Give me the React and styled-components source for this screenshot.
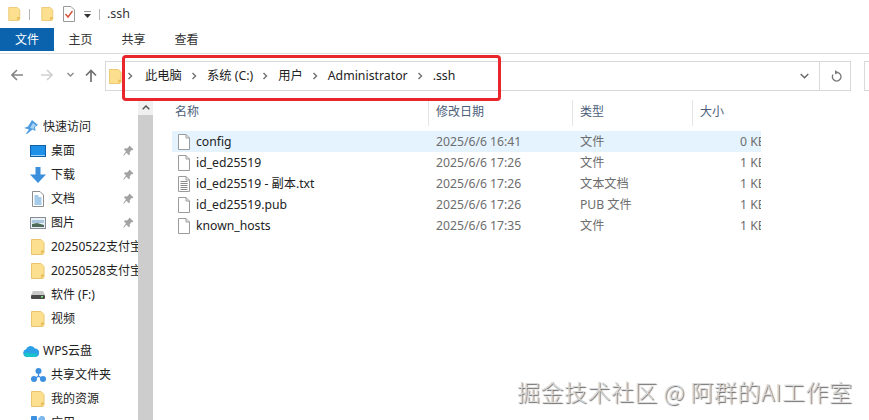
import React from "react";
import styled, { createGlobalStyle } from "styled-components";

const Global = createGlobalStyle`
  html, body { margin: 0; padding: 0; background: #fff; }
  * { box-sizing: border-box; }
`;
const Window = styled.div`
  position: relative; width: 869px; height: 420px; overflow: hidden; background: #fff;
  font: 12px/16px "Noto Sans", "Noto Sans CJK SC", sans-serif; color: #222;
  display: flex; flex-direction: column;
`;
const TitleBar = styled.div`
  height: 28px; flex: none; display: flex; align-items: center; padding: 0 0 0 8px;
  font-size: 12.5px; color: #333;
`;
const VLine = styled.span`
  width: 1px; height: 11px; background: #b5b5b5; flex: none; margin: ${p => p.$m};
`;
const Tabs = styled.div`
  height: 26px; flex: none; display: flex; align-items: flex-start; border-bottom: 1px solid #dcdcdc;
`;
const FileTab = styled.div`
  width: 54px; height: 23px; background: #0b63ae; color: #fff; display: flex; align-items: center; justify-content: center;
`;
const Tab = styled.div`
  width: 53px; height: 23px; display: flex; align-items: center; justify-content: center; color: #333;
`;
const NavRow = styled.div`
  height: 46px; flex: none; display: flex; align-items: flex-start; padding: 7px 0 0 11px;
`;
const NavIcon = styled.svg`
  flex: none; margin: ${p => p.$m}; display: block;
`;
const AddressBox = styled.div`
  width: 746px; height: 30px; flex: none; border: 1px solid #d9d9d9; display: flex; align-items: center; padding-left: 3px; margin-left: 8px;
`;
const Crumbs = styled.div`
  display: flex; align-items: center; margin-left: 5px; flex: 1; font-size: 12.3px; color: #222;
`;
const Crumb = styled.span`
  margin: 0 9px 0 ${p => p.$first ? 12 : 10}px; white-space: nowrap;
`;
const AddressEnd = styled.div`
  width: 31px; height: 28px; border-left: 1px solid #d9d9d9; display: flex; align-items: center; justify-content: center; flex: none; padding-left: 2px;
`;
const SearchBox = styled.div`
  width: 20px; height: 30px; margin-left: 13px; flex: none; border: 1px solid #d9d9d9; border-right: 0;
`;
const Main = styled.div`
  flex: 1; min-height: 0; display: flex;
`;
const Sidebar = styled.div`
  width: 138px; flex: none; overflow: hidden; padding-top: 15px;
`;
const NavItem = styled.div`
  height: 24px; display: flex; align-items: center; white-space: nowrap; position: relative;
  padding-left: ${p => p.$head ? "23px" : "30px"}; margin-top: ${p => p.$gap ? "8px" : "0"};
  font-size: 12px; color: #222;
`;
const NavLabel = styled.span`
  margin-left: ${p => p.$head ? "4px" : "5px"};
`;
const PinSlot = styled.span`
  position: absolute; left: 123px; top: 6px; display: block;
`;
const Scrollbar = styled.div`
  width: 15px; flex: none; background: #f0f0f0; display: flex; flex-direction: column;
`;
const ScrollUp = styled.div`
  height: 15px; flex: none; display: flex; align-items: center; justify-content: center;
`;
const ScrollThumb = styled.div`
  flex: 1; background: #cdcdcd;
`;
const Content = styled.div`
  flex: 1; padding-left: 19px; min-width: 0;
`;
const grid = `display: grid; grid-template-columns: 257px 144px 120px 68px; width: 589px;`;
const Header = styled.div`
  ${grid} height: 31px; color: #4c607a;
`;
const HeadCell = styled.div`
  height: 26px; padding: 0 0 2px ${p => p.$pad || 7}px; border-left: ${p => p.$first ? "0" : "1px solid #e5e5e5"};
  display: flex; align-items: center; margin-left: ${p => p.$first ? "0" : "-1px"};
`;
const Row = styled.div`
  ${grid} height: 21px; align-items: center; background: ${p => p.$sel ? "#e5f3ff" : "transparent"}; color: #6d6d6d;
`;
const NameCell = styled.div`
  display: flex; align-items: center; gap: 6px; padding-left: 6px; color: #222; font-size: 12.2px; white-space: nowrap;
`;
const Cell = styled.div`
  padding-left: ${p => p.$pad || 7}px; white-space: nowrap; overflow: hidden; font-size: 12.2px;
`;
const Highlight = styled.div`
  position: absolute; left: 122px; top: 55px; width: 379px; height: 46px;
  border: 3px solid #e8262b; border-radius: 4px;
`;
const Watermark = styled.div`
  position: absolute; left: 517px; top: 375px; font-size: 23px; line-height: 32px; white-space: nowrap; font-weight: 300;
  font-family: "Noto Sans CJK SC", sans-serif;
  color: #d8d8d8; text-shadow: 1px 1px 1px #666, -1px -1px 0 #fff; letter-spacing: .5px;
`;

const Folder = ({ w = 14, h = 16 }) => (
  <svg width={w} height={h} viewBox="0 0 14 16" style={{ flex: "none", display: "block" }}>
    <path d="M.5.5h9.500l3 3v10.500l-1 1.500H.5z" fill="#fde08f" stroke="#e9c56c" />
    <path d="M10 11.500v3.500l3-2v-1.500z" fill="#e8bf5a" />
  </svg>
);
const FileIcon = ({ lines }) => (
  <svg width="12" height="16" viewBox="0 0 12 16" style={{ flex: "none", display: "block" }}>
    <path d="M.5.500h7.500l3.500 3.500v11.500H.5z" fill="#fff" stroke="#9b9b9b" />
    <path d="M8 .500V4h3.500" fill="none" stroke="#9b9b9b" />
    {lines && <path d="M2.500 5.500h7M2.500 7.500h7M2.500 9.500h7M2.500 11.500h7M2.500 13.500h7" stroke="#8a8a8a" />}
  </svg>
);
const Chevron = () => (
  <svg width="6" height="8" viewBox="0 0 6 8" style={{ flex: "none", display: "block" }}>
    <path d="M1.500 1l3 3-3 3" fill="none" stroke="#777" strokeWidth="1.500" />
  </svg>
);
const Pin = () => (
  <svg width="11" height="12" viewBox="0 0 11 12" style={{ display: "block" }}>
    <path d="M6.500.500l4 4-1 .8-.8-.2-2 2.200.2 2-1 1-2.500-2.500L1 10.500 0 10.500 3 6.500 1 4.200l1-1 2 .2 2-2z" fill="#a3a3a3" />
  </svg>
);
const IconSlot = styled.span`
  width: 16px; height: 16px; flex: none; display: flex; align-items: center; justify-content: center;
`;

const icons = {
  star: (
    <svg width="14" height="14" viewBox="0 0 14 14" style={{ display: "block" }}>
      <path d="M8 0l6 5-3 2 .5 4-3-1.500L3 14l-1-.5 3-4L0 8l4-1.500z" fill="#4d9be0" />
      <path d="M9 3l3 2.500-2 1.500.3 2L6 8z" fill="#a9d4f5" />
    </svg>
  ),
  desktop: (
    <svg width="16" height="12" viewBox="0 0 16 12" style={{ display: "block" }}>
      <rect x=".5" y=".5" width="15" height="11" fill="#1e90e8" stroke="#0f5fa8" />
      <rect x="1" y="10" width="14" height="1" fill="#9bd0f5" />
    </svg>
  ),
  download: (
    <svg width="16" height="16" viewBox="0 0 16 16" style={{ display: "block" }}>
      <path d="M5.500 0h5v7.500H16L8 16 0 7.500h5.500z" fill="#3b8fdc" />
    </svg>
  ),
  doc: (
    <svg width="12" height="16" viewBox="0 0 12 16" style={{ display: "block" }}>
      <path d="M.5.500h7.500l3.500 3.500v11.500H.5z" fill="#fff" stroke="#8f8f8f" />
      <path d="M2.500 5h4M2.500 7h7M2.500 9h7M2.500 11h7M2.500 13h7" stroke="#4b97d5" />
    </svg>
  ),
  picture: (
    <svg width="16" height="12" viewBox="0 0 16 12" style={{ display: "block" }}>
      <rect x=".5" y=".5" width="15" height="11" fill="#e9f1f6" stroke="#858c92" />
      <path d="M2 3h12v3H2z" fill="#a9c6dd" />
      <path d="M2 7l5-1 7 2v2H2z" fill="#4d6b58" />
    </svg>
  ),
  drive: (
    <svg width="14" height="8" viewBox="0 0 14 8" style={{ display: "block" }}>
      <path d="M2 0h10l2 4H0z" fill="#c9c9c9" />
      <rect y="4" width="14" height="4" rx="1" fill="#4a4a4a" />
      <rect x="10" y="5" width="2" height="1.500" fill="#7fe07f" />
    </svg>
  ),
  cloud: (
    <svg width="16" height="12" viewBox="0 0 16 12" style={{ display: "block" }}>
      <path d="M4 12a4 4 0 0 1-1-7.800A5 5 0 0 1 12 3.500 4.200 4.200 0 0 1 12 12z" fill="#2d9fe8" />
      <path d="M1 9c3-3 7 1 13-1 0 2-1 4-2 4H4C2.500 12 1.500 10.500 1 9z" fill="#16c4c9" />
    </svg>
  ),
  share: (
    <svg width="15" height="14" viewBox="0 0 15 14" style={{ display: "block" }}>
      <path d="M7.500 3v5M7.500 8l-4 3M7.500 8l4 3" stroke="#3d8fe0" strokeWidth="1.200" />
      <circle cx="7.500" cy="3" r="3" fill="#3d8fe0" />
      <circle cx="3" cy="11" r="3" fill="#3d8fe0" />
      <circle cx="12" cy="11" r="3" fill="#3d8fe0" />
    </svg>
  ),
  apps: (
    <svg width="14" height="14" viewBox="0 0 14 14" style={{ display: "block" }}>
      <rect width="6" height="6" rx="1" fill="#3d8fe0" />
      <rect x="8" width="6" height="6" rx="1" transform="rotate(45 11 3)" fill="#7db8ee" />
      <rect y="8" width="6" height="6" rx="1" fill="#3d8fe0" />
      <rect x="8" y="8" width="6" height="6" rx="1" fill="#3d8fe0" />
    </svg>
  ),
  folder: <Folder />,
};

const navItems = [
  { icon: "star", label: "快速访问", head: true },
  { icon: "desktop", label: "桌面", pin: true },
  { icon: "download", label: "下载", pin: true },
  { icon: "doc", label: "文档", pin: true },
  { icon: "picture", label: "图片", pin: true },
  { icon: "folder", label: "20250522支付宝" },
  { icon: "folder", label: "20250528支付宝" },
  { icon: "drive", label: "软件 (F:)" },
  { icon: "folder", label: "视频" },
  { icon: "cloud", label: "WPS云盘", head: true, gap: true },
  { icon: "share", label: "共享文件夹" },
  { icon: "folder", label: "我的资源" },
  { icon: "apps", label: "应用" },
];
const files = [
  { name: "config", date: "2025/6/6 16:41", type: "文件", size: "0 KB", sel: true },
  { name: "id_ed25519", date: "2025/6/6 17:26", type: "文件", size: "1 KB" },
  { name: "id_ed25519 - 副本.txt", date: "2025/6/6 17:26", type: "文本文档", size: "1 KB", lines: true },
  { name: "id_ed25519.pub", date: "2025/6/6 17:26", type: "PUB 文件", size: "1 KB" },
  { name: "known_hosts", date: "2025/6/6 17:35", type: "文件", size: "1 KB" },
];
const crumbs = ["此电脑", "系统 (C:)", "用户", "Administrator", ".ssh"];

export default function App() {
  return (
    <Window>
      <Global />
      <TitleBar>
        <Folder w={13} h={14} />
        <VLine $m="0 11px 0 8px" />
        <Folder w={13} h={14} />
        <NavIcon $m="0 0 0 9px" width="12" height="16" viewBox="0 0 12 16">
          <path d="M.5.500h7.500l3.500 3.500v11.500H.5z" fill="#fff" stroke="#9a9a9a" />
          <path d="M2.500 8l2.500 3 4.500-6" fill="none" stroke="#d8503c" strokeWidth="1.400" />
        </NavIcon>
        <NavIcon $m="0 0 0 9px" width="7" height="7" viewBox="0 0 7 7">
          <path d="M0 0h7" stroke="#333" />
          <path d="M0 3h7L3.500 7z" fill="#333" />
        </NavIcon>
        <VLine $m="0 7px 0 8px" />
        <span>.ssh</span>
      </TitleBar>
      <Tabs>
        <FileTab>文件</FileTab>
        <Tab>主页</Tab>
        <Tab>共享</Tab>
        <Tab>查看</Tab>
      </Tabs>
      <NavRow>
        <NavIcon $m="8px 0 0 0" width="12" height="12" viewBox="0 0 12 12">
          <path d="M12 6H1.500M6 1L1 6l5 5" fill="none" stroke="#858585" strokeWidth="1.600" />
        </NavIcon>
        <NavIcon $m="8px 0 0 18px" width="12" height="12" viewBox="0 0 12 12">
          <path d="M0 6h10.500M6 1l5 5-5 5" fill="none" stroke="#d0d0d0" strokeWidth="1.600" />
        </NavIcon>
        <NavIcon $m="11px 0 0 14px" width="7" height="5" viewBox="0 0 7 5">
          <path d="M.5 1l3 3 3-3" fill="none" stroke="#8a8a8a" strokeWidth="1.400" />
        </NavIcon>
        <NavIcon $m="8px 0 0 11px" width="12" height="13" viewBox="0 0 12 13">
          <path d="M6 13V1.500M1 6.500l5-5 5 5" fill="none" stroke="#707070" strokeWidth="1.700" />
        </NavIcon>
        <AddressBox>
          <Folder w={13} h={15} />
          <Crumbs>
            {crumbs.map((c, i) => (
              <React.Fragment key={c}>
                <Chevron />
                <Crumb $first={i === 0}>{c}</Crumb>
              </React.Fragment>
            ))}
          </Crumbs>
          <NavIcon $m="0 10px 0 0" width="9" height="6" viewBox="0 0 9 6">
            <path d="M.7 1l3.800 3.800L8.300 1" fill="none" stroke="#666" strokeWidth="1.400" />
          </NavIcon>
          <AddressEnd>
            <svg width="11" height="12" viewBox="0 0 11 12" style={{ display: "block" }}>
              <path d="M5 1.500h2.500M6.500 1.500A4.300 4.300 0 1 1 2 3.500" transform="translate(0 1)" fill="none" stroke="#777" strokeWidth="1.300" />
              <path d="M4 0l3 2.500L4 4.500z" fill="#777" />
            </svg>
          </AddressEnd>
        </AddressBox>
        <SearchBox />
      </NavRow>
      <Main>
        <Sidebar>
          {navItems.map(n => (
            <NavItem key={n.label} $head={n.head} $gap={n.gap}>
              <IconSlot>{icons[n.icon]}</IconSlot>
              <NavLabel $head={n.head}>{n.label}</NavLabel>
              {n.pin && <PinSlot><Pin /></PinSlot>}
            </NavItem>
          ))}
        </Sidebar>
        <Scrollbar>
          <ScrollUp>
            <svg width="8" height="5" viewBox="0 0 8 5" style={{ display: "block" }}>
              <path d="M.7 4.300L4 1l3.300 3.300" fill="none" stroke="#505050" strokeWidth="1.400" />
            </svg>
          </ScrollUp>
          <ScrollThumb />
        </Scrollbar>
        <Content>
          <Header>
            <HeadCell $first $pad={3}>名称</HeadCell>
            <HeadCell>修改日期</HeadCell>
            <HeadCell>类型</HeadCell>
            <HeadCell>大小</HeadCell>
          </Header>
          {files.map(f => (
            <Row key={f.name} $sel={f.sel}>
              <NameCell><FileIcon lines={f.lines} />{f.name}</NameCell>
              <Cell>{f.date}</Cell>
              <Cell>{f.type}</Cell>
              <Cell $pad={47}>{f.size}</Cell>
            </Row>
          ))}
        </Content>
      </Main>
      <Highlight />
      <Watermark>掘金技术社区 @ 阿群的AI工作室</Watermark>
    </Window>
  );
}
